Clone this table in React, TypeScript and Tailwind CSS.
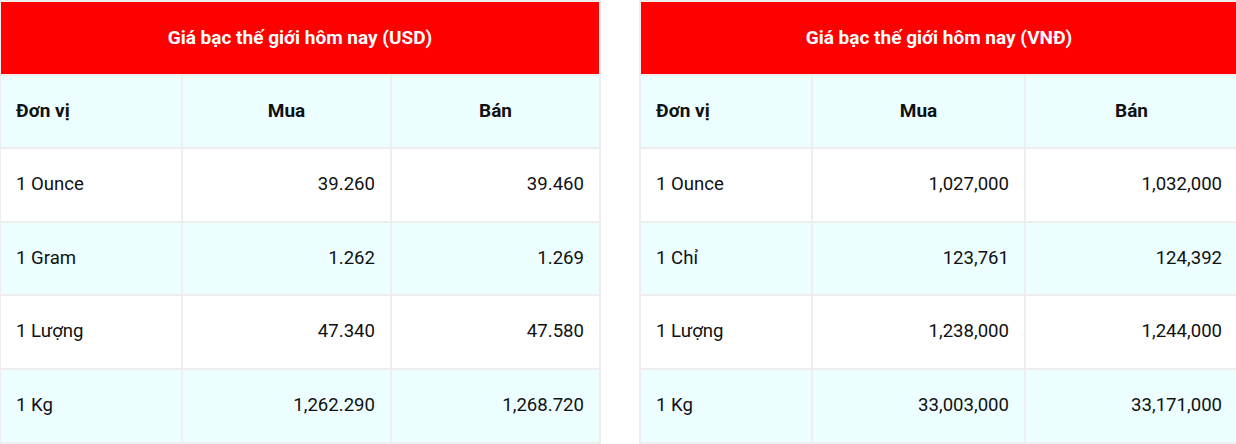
const usdRows = [
  ["1 Ounce", "39.260", "39.460"],
  ["1 Gram", "1.262", "1.269"],
  ["1 Lượng", "47.340", "47.580"],
  ["1 Kg", "1,262.290", "1,268.720"],
];

const vndRows = [
  ["1 Ounce", "1,027,000", "1,032,000"],
  ["1 Chỉ", "123,761", "124,392"],
  ["1 Lượng", "1,238,000", "1,244,000"],
  ["1 Kg", "33,003,000", "33,171,000"],
];

function PriceTable({ title, rows, widths }: { title: string; rows: string[][]; widths: string[] }) {
  return (
    <table className="table-fixed border-collapse text-[#111]" style={{ width: widths.reduce((a, w) => a + parseInt(w), 0) }}>
      <colgroup>
        {widths.map((w, i) => (
          <col key={i} style={{ width: w }} />
        ))}
      </colgroup>
      <thead>
        <tr>
          <th colSpan={3} className="h-[73.6px] border-2 border-[#eeeeee] bg-[#ff0000] text-center text-[19px] font-bold text-white">
            {title}
          </th>
        </tr>
        <tr className="bg-cyan-50">
          <th className="h-[73.6px] border-2 border-[#eeeeee] px-[15px] text-left text-[19px] font-bold">Đơn vị</th>
          <th className="h-[73.6px] border-2 border-[#eeeeee] px-[15px] text-center text-[19px] font-bold">Mua</th>
          <th className="h-[73.6px] border-2 border-[#eeeeee] px-[15px] text-center text-[19px] font-bold">Bán</th>
        </tr>
      </thead>
      <tbody>
        {rows.map((r, i) => (
          <tr key={i} className={i % 2 === 1 ? "bg-cyan-50" : "bg-white"}>
            <td className="h-[73.6px] border-2 border-[#eeeeee] px-[15px] text-left text-[18.6px]">{r[0]}</td>
            <td className="h-[73.6px] border-2 border-[#eeeeee] px-[15px] text-right text-[18.6px]">{r[1]}</td>
            <td className="h-[73.6px] border-2 border-[#eeeeee] px-[15px] text-right text-[18.6px]">{r[2]}</td>
          </tr>
        ))}
      </tbody>
    </table>
  );
}

export default function App() {
  return (
    <div className="-ml-px flex w-[1237px] gap-[38px] bg-white font-['Roboto',sans-serif]">
      <PriceTable title="Giá bạc thế giới hôm nay (USD)" rows={usdRows} widths={["182px", "209px", "209px"]} />
      <PriceTable title="Giá bạc thế giới hôm nay (VNĐ)" rows={vndRows} widths={["172px", "213px", "213px"]} />
    </div>
  );
}
